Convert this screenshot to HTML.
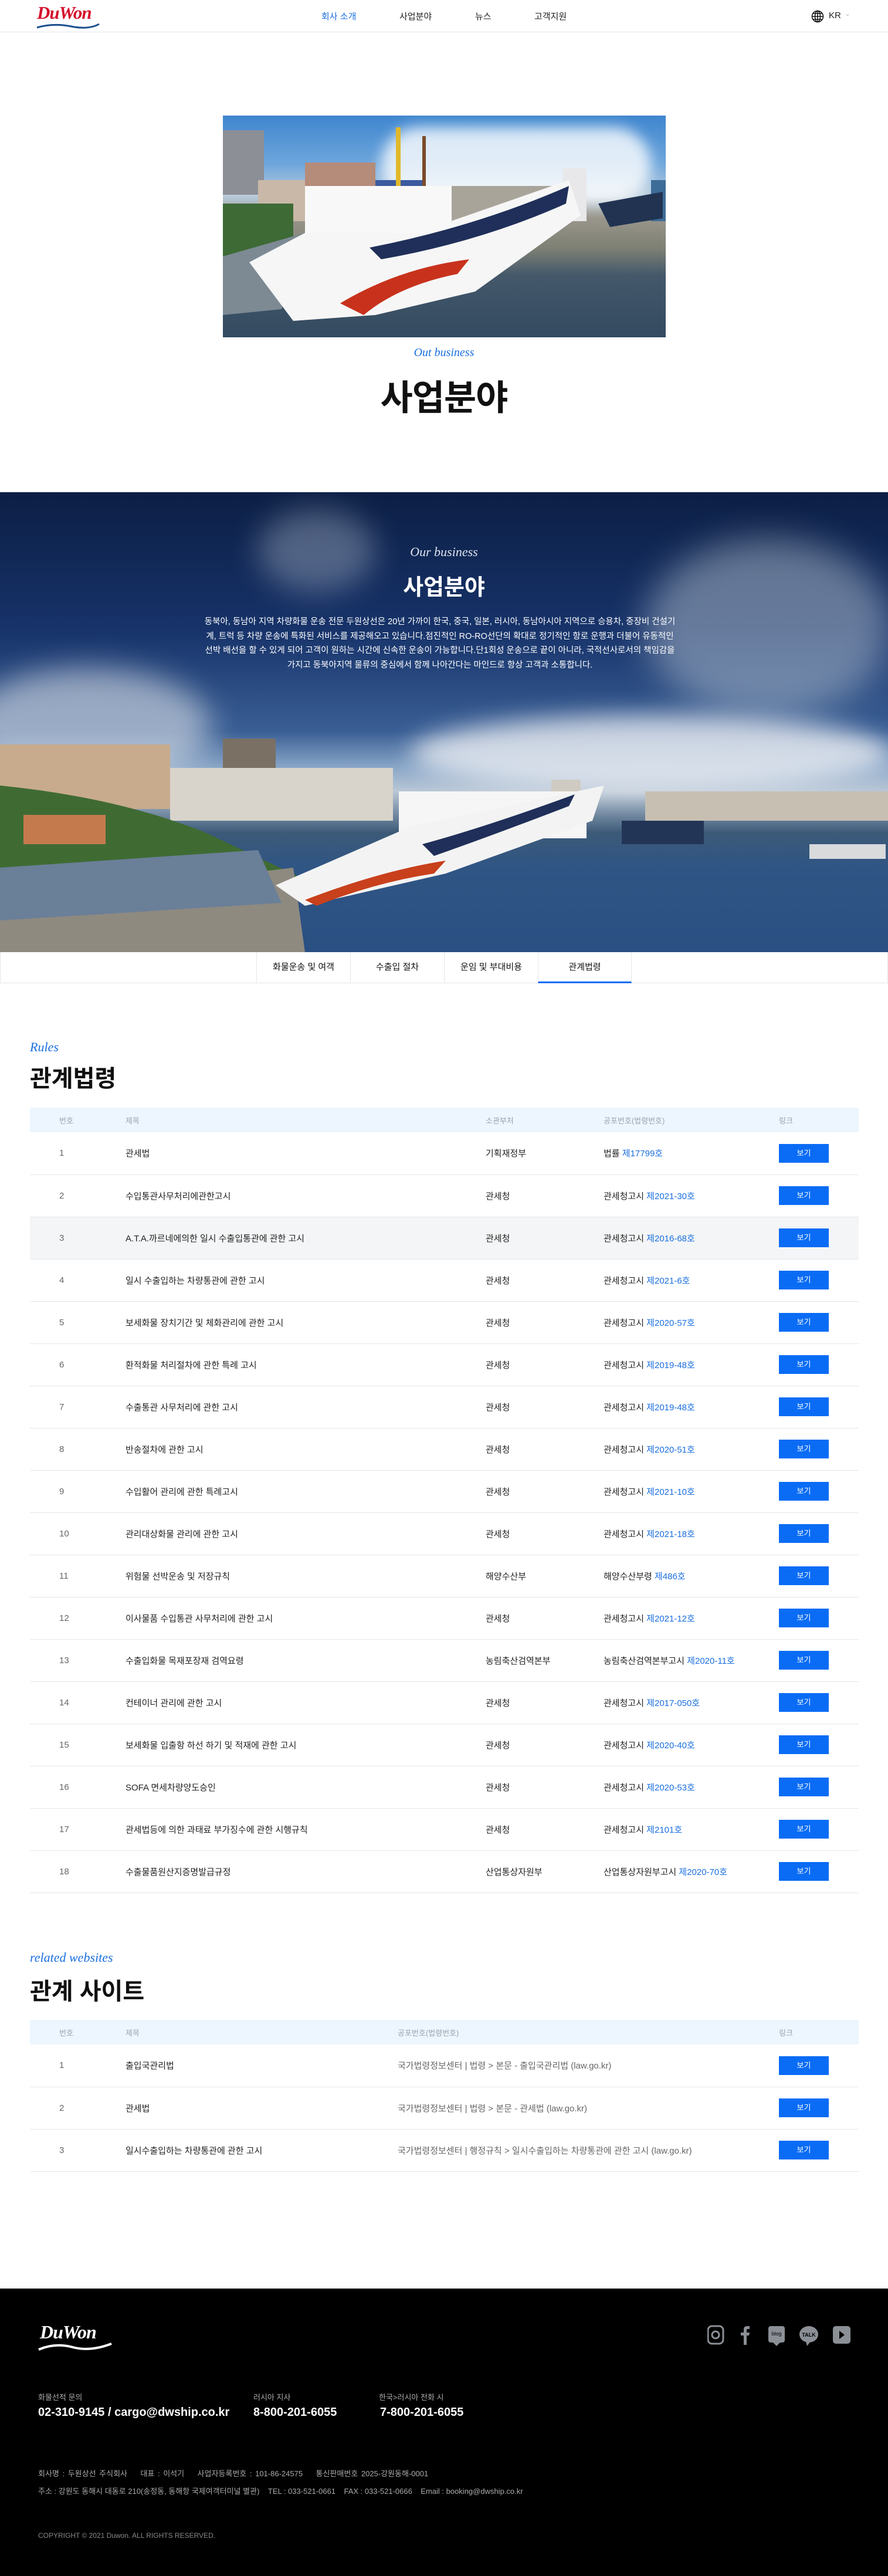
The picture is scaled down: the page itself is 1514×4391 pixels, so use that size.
<!DOCTYPE html>
<html lang="ko"><head><meta charset="utf-8">
<style>
*{margin:0;padding:0;box-sizing:border-box}
body{width:1514px;height:4391px;position:relative;background:#fff;font-family:"Liberation Sans","Noto Sans CJK KR",sans-serif;color:#111;overflow:hidden}
.abs{position:absolute}
.hdr{top:0;left:0;width:1514px;height:55px;border-bottom:1px solid #e3e6ea}
.logo{font-family:"Liberation Serif",serif;font-style:italic;font-weight:bold;color:#d5102b;font-size:31px;letter-spacing:-1px}
.nav{top:17px;font-size:15px;color:#222}
.serif{font-family:"Liberation Serif",serif;font-style:italic;color:#1a6fe0}
table{border-collapse:collapse;position:absolute;left:51px;width:1413px;font-size:15px}
th{background:#edf6fe;height:42px;font-weight:normal;color:#9aa3ad;font-size:13px;text-align:left}
td{height:72px;border-bottom:1px solid #e3e6ea;color:#222}
td.n{color:#666}
.b{color:#1a6fe0}
.btn{display:inline-block;width:85px;height:32px;background:#0a6cf5;color:#fff;font-size:13px;text-align:center;line-height:32px}
.foot{top:3901px;left:0;width:1514px;height:490px;background:#000;color:#fff}
</style></head><body>

<div class="abs hdr"></div>
<div class="abs" style="left:63px;top:4px"><div class="logo">DuWon</div>
<svg width="110" height="14" style="position:absolute;left:-2px;top:33px"><path d="M2 10 Q30 2 60 8 T108 4" stroke="#1a4f8f" stroke-width="3" fill="none"/></svg></div>
<div class="abs nav" style="left:548px;color:#1a6fe0">회사 소개</div>
<div class="abs nav" style="left:681px">사업분야</div>
<div class="abs nav" style="left:810px">뉴스</div>
<div class="abs nav" style="left:911px">고객지원</div>
<svg class="abs" style="left:1383px;top:17px" width="22" height="22" viewBox="0 0 22 22" fill="none" stroke="#111" stroke-width="1.5"><circle cx="11" cy="11" r="9.5"/><ellipse cx="11" cy="11" rx="4.5" ry="9.5"/><path d="M11 1.5v19M1.5 11h19M3 6h16M3 16h16"/></svg>
<div class="abs nav" style="left:1413px;top:18px">KR</div>
<div class="abs" style="left:1440px;top:16px;color:#bbb;font-size:12px">⌄</div>

<!-- top image -->
<div class="abs" style="left:380px;top:197px;width:755px;height:378px;overflow:hidden;background:linear-gradient(180deg,#3f86cf 0%,#6ea6dc 22%,#b9cddd 36%,#9a968c 46%,#7d8074 60%,#44586a 72%,#334a60 100%)">
 <div class="abs" style="left:270px;top:20px;width:460px;height:130px;border-radius:65px;background:rgba(255,255,255,.8);filter:blur(12px)"></div>
 <svg class="abs" style="left:0;top:0" width="755" height="378">
  <rect x="0" y="25" width="70" height="110" fill="#8c8f96"/>
  <rect x="60" y="110" width="120" height="70" fill="#c9b8a8"/><rect x="140" y="80" width="120" height="80" fill="#b58b7a"/>
  <rect x="260" y="110" width="80" height="70" fill="#3c5aa0"/><rect x="190" y="120" width="100" height="60" fill="#ece5d0"/>
  <rect x="295" y="20" width="8" height="160" fill="#e0b82a"/><rect x="340" y="35" width="6" height="150" fill="#7a4a2a"/>
  <rect x="580" y="90" width="40" height="90" fill="#e8e8ea"/><rect x="730" y="110" width="25" height="70" fill="#3e6c98"/>
  <rect x="360" y="120" width="220" height="60" fill="#a9a49a"/>
  <rect x="0" y="150" width="120" height="160" fill="#3d6a35"/>
  <path d="M0 240 L140 200 L100 330 L0 340Z" fill="#7d8a94"/>
  <path d="M45 250 L140 200 L360 190 L590 110 L610 170 L430 300 L260 340 L120 350 Z" fill="#f6f6f6"/>
  <rect x="140" y="120" width="250" height="80" fill="#f8f8f8"/>
  <path d="M200 320 Q300 260 420 245 L400 270 Q300 290 240 340Z" fill="#c8321c"/>
  <path d="M250 225 Q430 190 590 120 L585 150 Q440 215 270 245Z" fill="#1f2f59"/>
  <path d="M640 150 L750 130 L750 175 L660 190Z" fill="#223352"/>
 </svg>
</div>
<div class="abs serif" style="left:0;width:1514px;text-align:center;top:590px;font-size:20px">Out business</div>
<div class="abs" style="left:0;width:1514px;text-align:center;top:630px;font-size:60px;font-weight:bold;letter-spacing:-1px">사업분야</div>

<!-- hero -->
<div class="abs" style="left:0;top:839px;width:1514px;height:784px;overflow:hidden;background:linear-gradient(180deg,#0c1f45 0%,#17336a 30%,#3a5f95 52%,#8aa7c8 60%,#b9c7d6 65%,#3c5a78 74%,#2f5585 82%,#2a4f82 100%)">
 <div class="abs" style="left:-60px;top:300px;width:420px;height:200px;border-radius:50%;background:rgba(220,225,232,.6);filter:blur(25px)"></div>
 <div class="abs" style="left:1100px;top:80px;width:420px;height:300px;border-radius:50%;background:rgba(200,210,220,.45);filter:blur(30px)"></div>
 <div class="abs" style="left:700px;top:380px;width:820px;height:130px;border-radius:50%;background:rgba(235,238,242,.8);filter:blur(20px)"></div>
 <div class="abs" style="left:440px;top:30px;width:200px;height:140px;border-radius:50%;background:rgba(200,210,220,.35);filter:blur(25px)"></div>
 <svg class="abs" style="left:0;top:0" width="1514" height="784">
  <rect x="0" y="430" width="290" height="110" fill="#c7ab8c"/><rect x="380" y="420" width="90" height="110" fill="#7a7064"/>
  <rect x="290" y="470" width="380" height="90" fill="#d8d4cc"/><rect x="940" y="490" width="50" height="80" fill="#cfcbc3"/>
  <rect x="1100" y="510" width="414" height="50" fill="#c6bfb2"/>
  <path d="M0 500 Q200 520 350 580 L520 660 L0 700Z" fill="#3f6b33"/>
  <rect x="40" y="550" width="140" height="50" fill="#c57a4e"/>
  <path d="M0 700 L500 640 L520 784 L0 784Z" fill="#8e8a80"/>
  <path d="M0 640 L440 610 L480 700 L0 730Z" fill="#6a7f98"/>
  <rect x="680" y="510" width="320" height="80" fill="#f6f6f6"/>
  <path d="M470 670 L700 570 L1030 500 L1010 560 L760 650 L520 705Z" fill="#f3f3f3"/>
  <path d="M520 695 Q650 645 760 628 L740 650 Q640 665 540 705Z" fill="#c8401c"/>
  <path d="M720 600 Q830 570 980 515 L970 535 Q840 585 740 620Z" fill="#1f2f59"/>
  <rect x="1060" y="560" width="140" height="40" fill="#233556"/>
  <rect x="1380" y="600" width="130" height="25" fill="#d8dadc"/>
 </svg>
</div>
<div class="abs" style="left:0;width:1514px;top:928px;text-align:center;font-family:'Liberation Serif',serif;font-style:italic;color:#dde4ee;font-size:22px">Our business</div>
<div class="abs" style="left:0;width:1514px;top:970px;text-align:center;color:#fff;font-size:38px;font-weight:bold">사업분야</div>
<div class="abs" style="left:345px;width:810px;top:1048px;text-align:center;color:#fff;font-size:14.5px;line-height:24.5px">동북아, 동남아 지역 차량화물 운송 전문 두원상선은 20년 가까이 한국, 중국, 일본, 러시아, 동남아시아 지역으로 승용차, 중장비 건설기계, 트럭 등 차량 운송에 특화된 서비스를 제공해오고 있습니다.점진적인 RO-RO선단의 확대로 정기적인 항로 운행과 더불어 유동적인 선박 배선을 할 수 있게 되어 고객이 원하는 시간에 신속한 운송이 가능합니다.단1회성 운송으로 끝이 아니라, 국적선사로서의 책임감을 가지고 동북아지역 물류의 중심에서 함께 나아간다는 마인드로 항상 고객과 소통합니다.</div>

<!-- tabs -->
<div class="abs" style="left:0;top:1623px;width:1514px;height:53px;border-bottom:1px solid #e3e6ea;border-left:1px solid #e3e6ea;border-right:1px solid #e3e6ea"></div>
<div class="abs" style="left:437px;top:1623px;display:flex;font-size:15px">
<div style="width:160px;height:53px;line-height:52px;text-align:center;border-left:1px solid #e3e6ea">화물운송 및 여객</div>
<div style="width:160px;height:53px;line-height:52px;text-align:center;border-left:1px solid #e3e6ea">수출입 절차</div>
<div style="width:160px;height:53px;line-height:52px;text-align:center;border-left:1px solid #e3e6ea">운임 및 부대비용</div>
<div style="width:160px;height:53px;line-height:52px;text-align:center;border-left:1px solid #e3e6ea;border-right:1px solid #e3e6ea;border-bottom:3px solid #0a6cf5">관계법령</div>
</div>

<div class="abs serif" style="left:51px;top:1772px;font-size:22px">Rules</div>
<div class="abs" style="left:51px;top:1806px;font-size:40px;font-weight:bold">관계법령</div>

<table style="top:1888px">
<tr><th style="width:163px;padding-left:50px">번호</th><th style="width:614px">제목</th><th style="width:201px">소관부처</th><th style="width:299px">공포번호(법령번호)</th><th>링크</th></tr>
<tr><td class="n" style="padding-left:50px">1</td><td>관세법</td><td>기획재정부</td><td>법률 <span class="b">제17799호</span></td><td><span class="btn">보기</span></td></tr>
<tr><td class="n" style="padding-left:50px">2</td><td>수입통관사무처리에관한고시</td><td>관세청</td><td>관세청고시 <span class="b">제2021-30호</span></td><td><span class="btn">보기</span></td></tr>
<tr style="background:#f4f5f6"><td class="n" style="padding-left:50px">3</td><td>A.T.A.까르네에의한 일시 수출입통관에 관한 고시</td><td>관세청</td><td>관세청고시 <span class="b">제2016-68호</span></td><td><span class="btn">보기</span></td></tr>
<tr><td class="n" style="padding-left:50px">4</td><td>일시 수출입하는 차량통관에 관한 고시</td><td>관세청</td><td>관세청고시 <span class="b">제2021-6호</span></td><td><span class="btn">보기</span></td></tr>
<tr><td class="n" style="padding-left:50px">5</td><td>보세화물 장치기간 및 체화관리에 관한 고시</td><td>관세청</td><td>관세청고시 <span class="b">제2020-57호</span></td><td><span class="btn">보기</span></td></tr>
<tr><td class="n" style="padding-left:50px">6</td><td>환적화물 처리절차에 관한 특례 고시</td><td>관세청</td><td>관세청고시 <span class="b">제2019-48호</span></td><td><span class="btn">보기</span></td></tr>
<tr><td class="n" style="padding-left:50px">7</td><td>수출통관 사무처리에 관한 고시</td><td>관세청</td><td>관세청고시 <span class="b">제2019-48호</span></td><td><span class="btn">보기</span></td></tr>
<tr><td class="n" style="padding-left:50px">8</td><td>반송절차에 관한 고시</td><td>관세청</td><td>관세청고시 <span class="b">제2020-51호</span></td><td><span class="btn">보기</span></td></tr>
<tr><td class="n" style="padding-left:50px">9</td><td>수입활어 관리에 관한 특례고시</td><td>관세청</td><td>관세청고시 <span class="b">제2021-10호</span></td><td><span class="btn">보기</span></td></tr>
<tr><td class="n" style="padding-left:50px">10</td><td>관리대상화물 관리에 관한 고시</td><td>관세청</td><td>관세청고시 <span class="b">제2021-18호</span></td><td><span class="btn">보기</span></td></tr>
<tr><td class="n" style="padding-left:50px">11</td><td>위험물 선박운송 및 저장규칙</td><td>해양수산부</td><td>해양수산부령 <span class="b">제486호</span></td><td><span class="btn">보기</span></td></tr>
<tr><td class="n" style="padding-left:50px">12</td><td>이사물품 수입통관 사무처리에 관한 고시</td><td>관세청</td><td>관세청고시 <span class="b">제2021-12호</span></td><td><span class="btn">보기</span></td></tr>
<tr><td class="n" style="padding-left:50px">13</td><td>수출입화물 목재포장재 검역요령</td><td>농림축산검역본부</td><td>농림축산검역본부고시 <span class="b">제2020-11호</span></td><td><span class="btn">보기</span></td></tr>
<tr><td class="n" style="padding-left:50px">14</td><td>컨테이너 관리에 관한 고시</td><td>관세청</td><td>관세청고시 <span class="b">제2017-050호</span></td><td><span class="btn">보기</span></td></tr>
<tr><td class="n" style="padding-left:50px">15</td><td>보세화물 입출항 하선 하기 및 적재에 관한 고시</td><td>관세청</td><td>관세청고시 <span class="b">제2020-40호</span></td><td><span class="btn">보기</span></td></tr>
<tr><td class="n" style="padding-left:50px">16</td><td>SOFA 면세차량양도승인</td><td>관세청</td><td>관세청고시 <span class="b">제2020-53호</span></td><td><span class="btn">보기</span></td></tr>
<tr><td class="n" style="padding-left:50px">17</td><td>관세법등에 의한 과태료 부가징수에 관한 시행규칙</td><td>관세청</td><td>관세청고시 <span class="b">제2101호</span></td><td><span class="btn">보기</span></td></tr>
<tr><td class="n" style="padding-left:50px">18</td><td>수출물품원산지증명발급규정</td><td>산업통상자원부</td><td>산업통상자원부고시 <span class="b">제2020-70호</span></td><td><span class="btn">보기</span></td></tr>
</table>

<div class="abs serif" style="left:51px;top:3324px;font-size:22px">related websites</div>
<div class="abs" style="left:51px;top:3362px;font-size:40px;font-weight:bold">관계 사이트</div>
<table style="top:3443px">
<tr><th style="width:163px;padding-left:50px">번호</th><th style="width:464px">제목</th><th style="width:650px">공포번호(법령번호)</th><th>링크</th></tr>
<tr><td class="n" style="padding-left:50px">1</td><td>출입국관리법</td><td style="color:#666">국가법령정보센터 | 법령 &gt; 본문 - 출입국관리법 (law.go.kr)</td><td><span class="btn">보기</span></td></tr>
<tr><td class="n" style="padding-left:50px">2</td><td>관세법</td><td style="color:#666">국가법령정보센터 | 법령 &gt; 본문 - 관세법 (law.go.kr)</td><td><span class="btn">보기</span></td></tr>
<tr><td class="n" style="padding-left:50px">3</td><td>일시수출입하는 차량통관에 관한 고시</td><td style="color:#666">국가법령정보센터 | 행정규칙 &gt; 일시수출입하는 차량통관에 관한 고시 (law.go.kr)</td><td><span class="btn">보기</span></td></tr>
</table>

<!-- footer -->
<div class="abs foot">
 <div class="abs logo" style="left:68px;top:56px;color:#fff;font-size:32px">DuWon</div>
 <svg class="abs" style="left:64px;top:88px" width="130" height="20"><path d="M2 16 Q30 4 60 12 T126 6" stroke="#fff" stroke-width="4" fill="none"/></svg>
 <svg class="abs" style="left:1206px;top:62px" width="246" height="36" fill="#8b8f96">
  <rect x="1" y="2" width="26" height="30" rx="7" fill="none" stroke="#8b8f96" stroke-width="3"/><circle cx="14" cy="17" r="6" fill="none" stroke="#8b8f96" stroke-width="3"/>
  <path d="M62 34V18h-5v-5h5V8q0-6 6-6h4v5h-3q-2 0-2 2v4h5l-1 5h-4v16z"/>
  <rect x="104" y="2" width="28" height="28" rx="4"/><path d="M112 30l6 6 6-6z"/><text x="118" y="18" font-size="9" fill="#000" text-anchor="middle" font-family="Liberation Sans">blog</text>
  <ellipse cx="173" cy="16" rx="16" ry="14"/><path d="M168 28l2 8 6-8z"/><text x="173" y="20" font-size="9" font-weight="bold" fill="#000" text-anchor="middle" font-family="Liberation Sans">TALK</text>
  <rect x="214" y="2" width="30" height="30" rx="5"/><path d="M225 10l9 7-9 7z" fill="#000"/>
 </svg>
 <div class="abs" style="left:65px;top:175px;font-size:13px;color:#aaa">화물선적 문의</div>
 <div class="abs" style="left:432px;top:175px;font-size:13px;color:#aaa">러시아 지사</div>
 <div class="abs" style="left:646px;top:175px;font-size:13px;color:#aaa">한국&gt;러시아 전화 시</div>
 <div class="abs" style="left:65px;top:200px;font-size:20px;font-weight:bold">02-310-9145 / cargo@dwship.co.kr</div>
 <div class="abs" style="left:432px;top:200px;font-size:20px;font-weight:bold">8-800-201-6055</div>
 <div class="abs" style="left:648px;top:200px;font-size:20px;font-weight:bold">7-800-201-6055</div>
 <div class="abs" style="left:65px;top:305px;font-size:13px;color:#aaa;word-spacing:2px">회사명 : 두원상선 주식회사 &nbsp;&nbsp; 대표 : 이석기 &nbsp;&nbsp; 사업자등록번호 : 101-86-24575 &nbsp;&nbsp; 통신판매번호 2025-강원동해-0001</div>
 <div class="abs" style="left:65px;top:335px;font-size:13px;color:#aaa">주소 : 강원도 동해시 대동로 210(송정동, 동해항 국제여객터미널 별관) &nbsp;&nbsp; TEL : 033-521-0661 &nbsp;&nbsp; FAX : 033-521-0666 &nbsp;&nbsp; Email : booking@dwship.co.kr</div>
 <div class="abs" style="left:65px;top:414px;font-size:12px;color:#888">COPYRIGHT © 2021 Duwon. ALL RIGHTS RESERVED.</div>
</div>
</body></html>
